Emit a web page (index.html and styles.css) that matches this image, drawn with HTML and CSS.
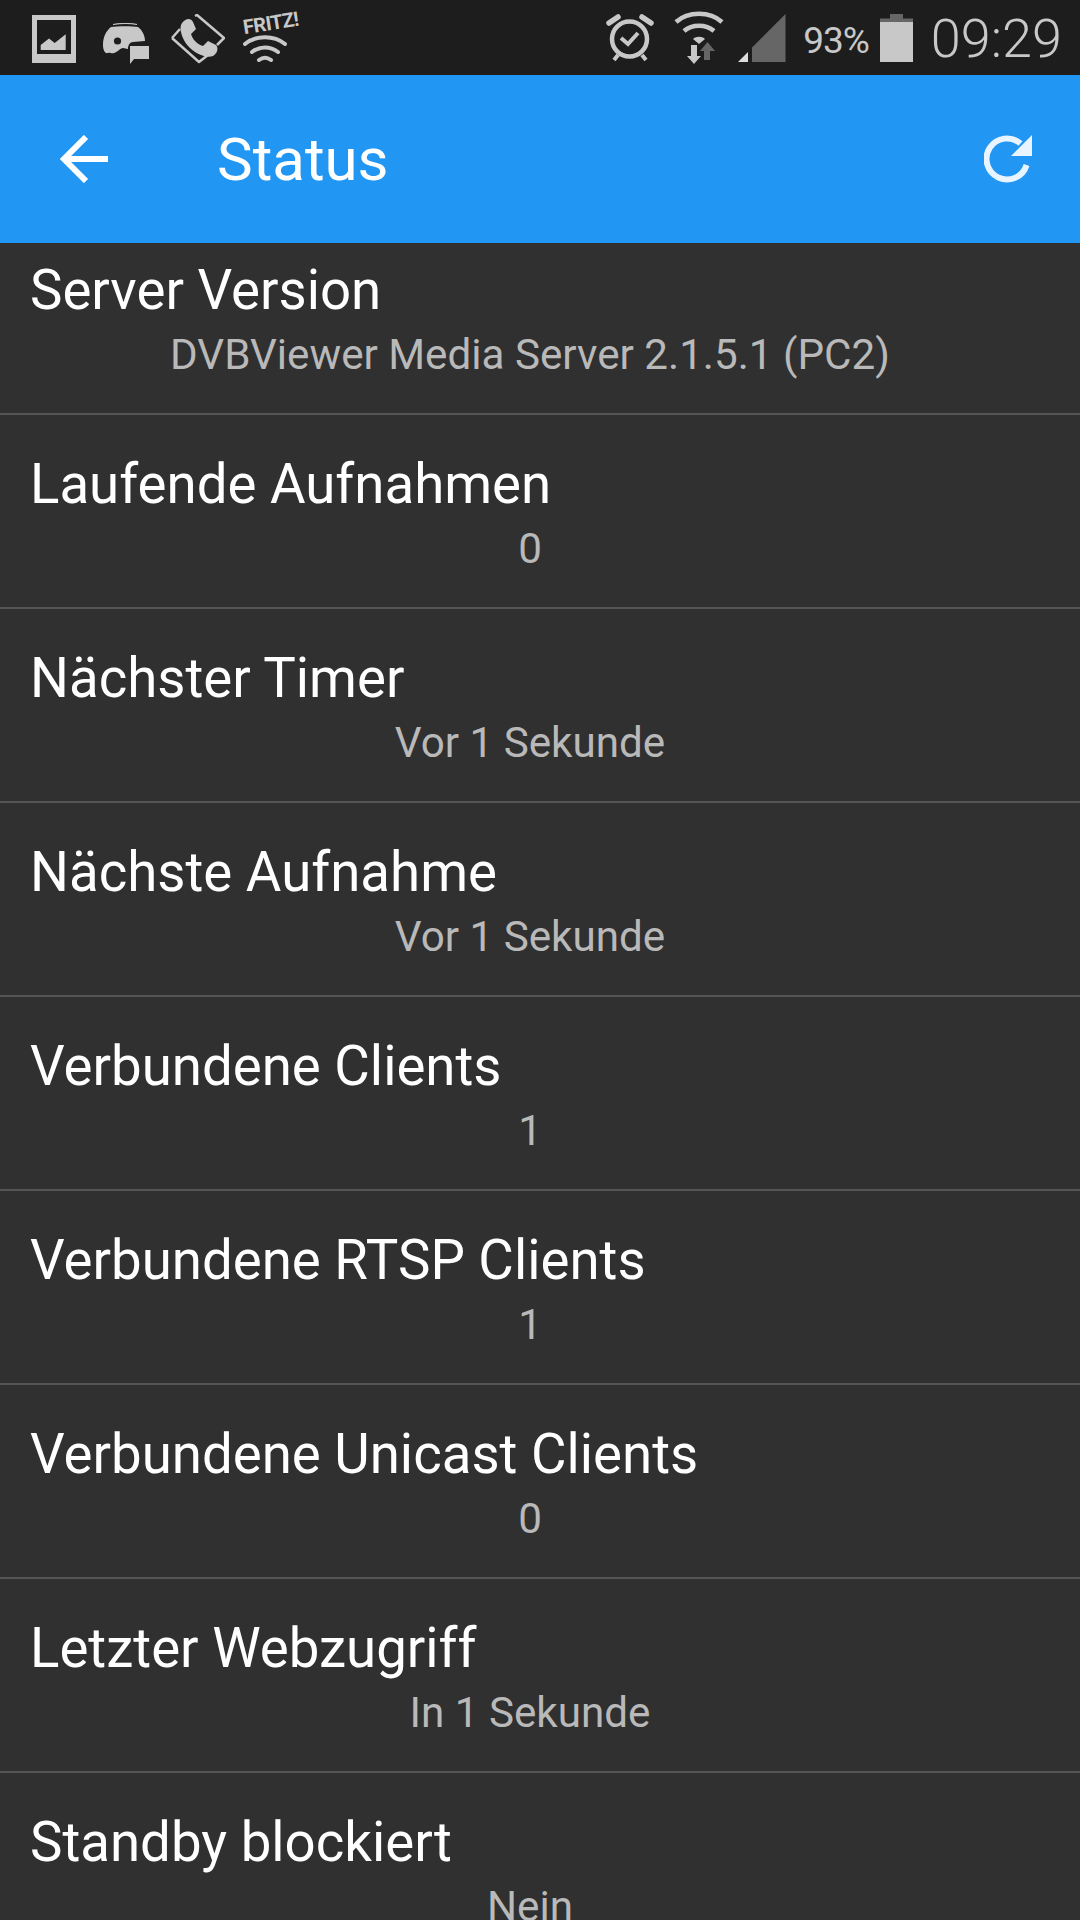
FILE: index.html
```html
<!DOCTYPE html>
<html lang="de">
<head>
<meta charset="utf-8">
<title>Status</title>
<link rel="stylesheet" href="styles.css">
</head>
<body>
<div class="app">
  <div class="statusbar">
    <div class="sb-left">
      <svg class="ic ic-img" width="44" height="48" viewBox="0 0 44 48"><path fill="#c8c8c8" d="M0 0H44V48H0Z"/><path fill="#1d1d1d" d="M5 5H39V39H5Z"/><path fill="#c8c8c8" d="M8.7 35V30L17 23.5L22.7 28L33.7 19.3V35Z"/></svg>
      <svg class="ic ic-chat" width="46" height="41" viewBox="0 0 46 41"><path fill="#c8c8c8" d="M0 22C0 14 3 8 8 4C14 3 30 3 35 4C39 7 42 12 42 18L30 19C27 19 25 22 25 26L20 25C17 25 15 29 11 30C8 31 7 29 5 30C2 31 0 27 0 22Z"/><path fill="none" stroke="#c8c8c8" stroke-width="1.2" d="M10 1.500Q23 -0.500 34 1.500"/><circle cx="14.500" cy="18" r="3.600" fill="#1d1d1d"/><path fill="#c8c8c8" d="M27 23H46V36H31L27 41Z"/></svg>
      <svg class="ic ic-phone" width="54" height="50" viewBox="0 0 54 50"><path fill="none" stroke="#c8c8c8" stroke-width="2.500" stroke-linejoin="round" d="M24 2L26 1L53 24L46 31M1 24L9 15M1 24L28 48L37 41"/><path fill="#c8c8c8" d="M11 9C15 4 20 4 22 8L25 15L20 20C22 26 26 30 32 32L37 27L45 31C48 34 46 40 42 42C34 45 20 38 14 28C10 21 8 13 11 9Z"/></svg>
      <div class="fritz">
        <span class="fritz-t">FRITZ!</span>
        <svg class="fritz-w" width="44" height="28" viewBox="0 0 44 28"><g fill="none" stroke="#c8c8c8" stroke-width="4" stroke-linecap="round"><path d="M2 10C13 1 31 1 42 10"/><path d="M9 18C17 12 27 12 35 18"/><path d="M16 26C20 23 24 23 28 26"/></g></svg>
      </div>
    </div>
    <div class="sb-right">
      <svg class="ic" width="48" height="48" viewBox="0 0 48 48"><g fill="none" stroke="#c8c8c8"><circle cx="23.500" cy="25" r="17.500" stroke-width="4.500"/><path stroke-width="4" d="M15 24L22 30L32 19"/><path stroke-width="5.500" stroke-linecap="round" d="M3 9L12 3M45 9L36 3"/><path stroke-width="4" d="M8 46L12 41M40 46L36 41"/></g></svg>
      <svg class="ic ic-w" width="50" height="53" viewBox="0 0 50 53"><g fill="none" stroke="#c8c8c8" stroke-width="4.500"><path d="M2 11C14 0 36 0 48 11"/><path d="M10 20C18 13 32 13 40 20"/></g><path fill="#c8c8c8" d="M19 28C22 25 28 25 31 28L25 33Z"/><path fill="#c8c8c8" d="M17 34H23V45H27L20 53L13 45H17Z"/><path fill="#666" d="M30 49V40H26L33.500 31L41 40H36V49Z"/></svg>
      <svg class="ic ic-s" width="48" height="48" viewBox="0 0 48 48"><path fill="#666" d="M47.500 0V48H14V33.500Z"/><path fill="#ddd" d="M10 38V48H0Z"/></svg>
      <span class="pct">93%</span>
      <svg class="ic ic-bat" width="33" height="48" viewBox="0 0 33 48"><path fill="#666" d="M10 0H23V4.500H33V8H0V4.500H10Z"/><path fill="#c8c8c8" d="M0 8H33V48H0Z"/></svg>
      <span class="clock">09:29</span>
    </div>
  </div>
  <div class="toolbar">
    <svg class="back" width="48" height="48" viewBox="0 0 48 48"><path fill="none" stroke="#fff" stroke-width="6" d="M48 24H4M26 2L4 24L26 46"/></svg>
    <span class="title">Status</span>
    <svg class="refresh" width="48" height="48" viewBox="0 0 48 48"><path fill="none" stroke="#e8f4ff" stroke-width="6" d="M42.600 30A20.500 20.500 0 1 1 36.500 8.500"/><path fill="#e8f4ff" d="M48 0V21H27Z"/></svg>
  </div>
  <div class="list">
    <div class="row"><div class="name">Server Version</div><div class="value">DVBViewer Media Server 2.1.5.1 (PC2)</div></div>
    <div class="row"><div class="name">Laufende Aufnahmen</div><div class="value">0</div></div>
    <div class="row"><div class="name">Nächster Timer</div><div class="value">Vor 1 Sekunde</div></div>
    <div class="row"><div class="name">Nächste Aufnahme</div><div class="value">Vor 1 Sekunde</div></div>
    <div class="row"><div class="name">Verbundene Clients</div><div class="value">1</div></div>
    <div class="row"><div class="name">Verbundene RTSP Clients</div><div class="value">1</div></div>
    <div class="row"><div class="name">Verbundene Unicast Clients</div><div class="value">0</div></div>
    <div class="row"><div class="name">Letzter Webzugriff</div><div class="value">In 1 Sekunde</div></div>
    <div class="row"><div class="name">Standby blockiert</div><div class="value">Nein</div></div>
  </div>
</div>
</body>
</html>
```
FILE: styles.css
```css
html, body { margin: 0; padding: 0; background: #303030; }
.app { width: 1080px; height: 1920px; overflow: hidden; display: flex; flex-direction: column; font-family: Roboto, sans-serif; background: #303030; }
.statusbar { height: 75px; flex: none; background: #1d1d1d; display: flex; justify-content: space-between; align-items: center; color: #c8c8c8; padding: 0 18px 0 32px; box-sizing: border-box; }
.sb-left, .sb-right { display: flex; align-items: center; }
.ic { display: block; flex: none; }
.ic-img { margin-top: 3px; }
.ic-chat { margin-left: 27px; margin-top: 11px; }
.ic-phone { margin-left: 22px; margin-top: 3px; }
.fritz { display: flex; flex-direction: column; align-items: flex-start; margin-left: 18px; width: 54px; }
.fritz-t { font-weight: 700; font-size: 20px; line-height: 21px; letter-spacing: -0.6px; white-space: nowrap; transform: rotate(-9deg); }
.fritz-w { display: block; }
.ic-w { margin-left: 20px; }
.ic-s { margin-left: 14px; }
.pct { font-size: 37px; margin-left: 17px; letter-spacing: -1px; margin-top: 5px; }
.ic-bat { margin-left: 11px; }
.clock { font-size: 54px; font-weight: 300; margin-left: 18px; margin-top: 2px; }
.toolbar { height: 168px; flex: none; background: #2196f3; display: flex; align-items: center; padding: 0 48px 0 60px; box-sizing: border-box; position: relative; z-index: 1; }
.title { color: #fff; font-size: 60px; margin-left: 109px; flex: 1; }
.list { margin-top: -22px; flex: none; }
.row { height: 192px; border-bottom: 2px solid #555; padding: 0 30px; }
.name { color: #fff; font-size: 54.6px; line-height: 70px; padding-top: 34px; }
.value { color: #b9b9b9; font-size: 42.2px; line-height: 60px; text-align: center; padding-right: 20px; }
```
